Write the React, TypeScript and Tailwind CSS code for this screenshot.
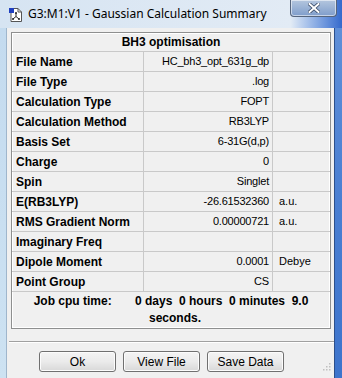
import React from "react";

const rows: { label: string; value: string; unit?: string }[] = [
  { label: "File Name", value: "HC_bh3_opt_631g_dp" },
  { label: "File Type", value: ".log" },
  { label: "Calculation Type", value: "FOPT" },
  { label: "Calculation Method", value: "RB3LYP" },
  { label: "Basis Set", value: "6-31G(d,p)" },
  { label: "Charge", value: "0" },
  { label: "Spin", value: "Singlet" },
  { label: "E(RB3LYP)", value: "-26.61532360", unit: "a.u." },
  { label: "RMS Gradient Norm", value: "0.00000721", unit: "a.u." },
  { label: "Imaginary Freq", value: "" },
  { label: "Dipole Moment", value: "0.0001", unit: "Debye" },
  { label: "Point Group", value: "CS" },
];

function AppIcon() {
  return (
    <svg width="16" height="16" viewBox="0 0 16 16">
      <path d="M3 1.5h7l3.5 3.5v9.5H3z" fill="#fff" stroke="#555" strokeWidth="1" />
      <path d="M10 1.5v3.5h3.5" fill="none" stroke="#555" strokeWidth="1" />
      <rect x="1" y="1" width="5" height="5" fill="#1f3fbf" />
      <path d="M8 6v3.5M8 9.5l-3 2.5M8 9.5l3 2.5" stroke="#222" strokeWidth="1" fill="none" />
      <circle cx="8" cy="6" r="1" fill="#222" />
      <circle cx="5" cy="12" r="1" fill="#222" />
      <circle cx="11" cy="12" r="1" fill="#222" />
    </svg>
  );
}

function Btn({ children }: { children: React.ReactNode }) {
  return (
    <button
      type="button"
      className="w-[77px] h-[21px] rounded-[3px] border border-[#707070] bg-gradient-to-b from-[#f4f4f4] via-[#ebebeb] to-[#d8d8d8] text-[12px] text-black leading-none shadow-[inset_0_0_0_1px_#fcfcfc]"
    >
      {children}
    </button>
  );
}

export default function App() {
  return (
    <div
      className="w-[342px] h-[378px] flex flex-col overflow-hidden bg-[#c9def0]"
      style={{ fontFamily: '"Liberation Sans", Arial, sans-serif' }}
    >
      {/* title bar */}
      <div className="relative h-[28px] flex items-center bg-gradient-to-r from-[#d6e4f2] via-[#e2ebf5] via-85% to-[#3469cc]">
        <div className="ml-[8px] mt-[1px]">
          <AppIcon />
        </div>
        <span
          className="ml-[4px] text-[12px] text-black"
          style={{ fontFamily: '"Noto Sans", "Open Sans", sans-serif' }}
        >
          G3:M1:V1 - Gaussian Calculation Summary
        </span>
        <div className="absolute left-[290px] top-0 w-[47px] h-[17px] rounded-b-[4px] border border-t-0 border-[#56657d] bg-gradient-to-b from-[#b4c6de] to-[#7f9dcb] shadow-[inset_0_0_0_1px_rgba(255,255,255,0.55)] flex items-center justify-center">
          <svg width="12" height="10" viewBox="0 0 12 10">
            <path d="M1.5 1l9 8M10.5 1l-9 8" stroke="#3a4a66" strokeWidth="3.6" strokeLinecap="square" />
            <path d="M1.5 1l9 8M10.5 1l-9 8" stroke="#fff" strokeWidth="2" strokeLinecap="square" />
          </svg>
        </div>
      </div>

      <div className="flex flex-1">
        <div className="w-[7px] bg-gradient-to-b from-[#c4dbef] to-[#cde2f2] border-r border-[#9fb6cc]" />
        {/* client */}
        <div className="w-[327px] bg-[#f0f0f0] flex flex-col pt-[4px] pl-[4px]">
          <div className="w-[320px] border border-[#8e8f8f] shadow-[inset_0_0_0_1px_#ffffff] bg-[#f0f0f0] text-[12px] text-black">
            <div className="h-[19px] border-b border-[#c9c9c9] flex items-center justify-center font-bold">
              BH3 optimisation
            </div>
            {rows.map((r) => (
              <div key={r.label} className="h-[20px] border-b border-[#c9c9c9] flex">
                <div className="w-[132px] border-r border-[#c9c9c9] pl-[4px] flex items-center font-bold">
                  {r.label}
                </div>
                <div className="w-[129px] border-r border-[#c9c9c9] pr-[3px] flex items-center justify-end text-[11px] tracking-[-0.2px]">
                  {r.value}
                </div>
                <div className="flex-1 pl-[6px] flex items-center text-[11px]">{r.unit}</div>
              </div>
            ))}
            <div className="h-[36px] flex flex-col items-center justify-center font-bold leading-[17px]">
              <div className="whitespace-pre">Job cpu time:       0 days  0 hours  0 minutes  9.0</div>
              <div className="pl-[8px]">seconds.</div>
            </div>
          </div>
          <div className="mt-[12px] ml-[-2px] w-[325px] h-[2px] border-t border-[#a0a0a0] border-b border-b-white" />
          <div className="mt-[8px] flex pl-[28px] gap-[7px] relative">
            <Btn>Ok</Btn>
            <Btn>View File</Btn>
            <Btn>Save Data</Btn>
            <svg className="absolute left-[312px] top-[12px]" width="8" height="8" viewBox="0 0 8 8">
              <rect x="6" y="0" width="1.5" height="1.5" fill="#c0c0c0" />
              <rect x="3" y="3" width="1.5" height="1.5" fill="#c0c0c0" />
              <rect x="6" y="3" width="1.5" height="1.5" fill="#c0c0c0" />
              <rect x="0" y="6" width="1.5" height="1.5" fill="#c0c0c0" />
              <rect x="3" y="6" width="1.5" height="1.5" fill="#c0c0c0" />
              <rect x="6" y="6" width="1.5" height="1.5" fill="#c0c0c0" />
            </svg>
          </div>
        </div>
        <div className="flex-1 bg-gradient-to-b from-[#5f8fd8] via-[#4a7fd2] to-[#3d74cc] border-l border-[#2c4f8a]" />
      </div>
    </div>
  );
}
